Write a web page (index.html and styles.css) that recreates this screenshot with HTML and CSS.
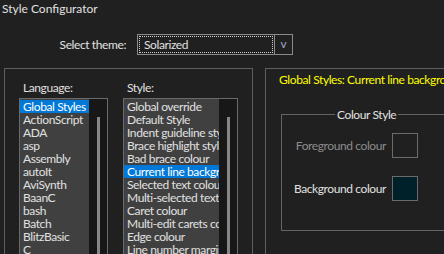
FILE: index.html
```html
<!DOCTYPE html>
<html lang="en">
<head>
    <meta charset="UTF-8">
    <meta name="viewport" content="width=device-width, initial-scale=1.0">
    <title>Style Configurator</title>
    <link rel="stylesheet" href="styles.css">
</head>
<body>
    <div class="title">Style Configurator</div>

    <div class="theme-row">
        <span class="theme-label">Select theme:</span>
        <div class="combo">
            <span class="combo-value">Solarized</span>
            <span class="combo-btn">v</span>
        </div>
    </div>

    <div class="main">
        <!-- language / style lists -->
        <div class="group left-group">
            <div class="col">
                <div class="col-label">Language:</div>
                <div class="listbox lang-list">
                    <ul class="items">
                        <li class="selected">Global Styles</li>
                        <li>ActionScript</li>
                        <li>ADA</li>
                        <li>asp</li>
                        <li>Assembly</li>
                        <li>autoIt</li>
                        <li>AviSynth</li>
                        <li>BaanC</li>
                        <li>bash</li>
                        <li>Batch</li>
                        <li>BlitzBasic</li>
                        <li>C</li>
                    </ul>
                    <div class="scroll"><div class="thumb"></div></div>
                </div>
            </div>
            <div class="col">
                <div class="col-label">Style:</div>
                <div class="listbox style-list">
                    <ul class="items">
                        <li>Global override</li>
                        <li>Default Style</li>
                        <li>Indent guideline style</li>
                        <li>Brace highlight style</li>
                        <li>Bad brace colour</li>
                        <li class="selected">Current line background colour</li>
                        <li>Selected text colour</li>
                        <li>Multi-selected text colour</li>
                        <li>Caret colour</li>
                        <li>Multi-edit carets colour</li>
                        <li>Edge colour</li>
                        <li>Line number margin</li>
                    </ul>
                    <div class="scroll"><div class="thumb"></div></div>
                </div>
            </div>
        </div>

        <!-- style details -->
        <div class="group right-group">
            <div class="heading">Global Styles: Current line background colour</div>
            <fieldset class="colour-style">
                <legend>Colour Style</legend>
                <div class="colour-rows">
                    <div class="colour-row disabled">
                        <span class="colour-label">Foreground colour</span>
                        <span class="swatch"></span>
                    </div>
                    <div class="colour-row">
                        <span class="colour-label">Background colour</span>
                        <span class="swatch bg-swatch"></span>
                    </div>
                </div>
            </fieldset>
        </div>
    </div>
</body>
</html>
```

FILE: styles.css
```css
body {
    margin: 0;
    width: 444px;
    height: 254px;
    overflow: hidden;
    background: #202020;
    color: #e0e0e0;
    font-family: Lato, "Noto Sans", sans-serif;
    font-size: 12px;
    line-height: 15px;
    letter-spacing: -0.4px;
}

.title {
    height: 18px;
    padding: 1px 2px 0;
    box-sizing: border-box;
    letter-spacing: 0;
}

/* theme picker */
.theme-row {
    display: flex;
    align-items: center;
    margin-top: 16px;
    padding-left: 40px;
}
.theme-label {
    width: 86px;
    text-align: right;
    margin-right: 11px;
}
.combo {
    display: flex;
    width: 156px;
    height: 21px;
    box-sizing: border-box;
    border: 1px solid #8a8a8a;
}
.combo-value {
    flex: 1;
    margin: 1px;
    padding-left: 4px;
    border: 1px dotted #cfcfcf;
    line-height: 15px;
}
.combo-btn {
    width: 17px;
    border-left: 1px solid #8a8a8a;
    text-align: center;
    color: #9ea6c8;
    line-height: 18px;
}

.main {
    display: flex;
    margin-top: 13px;
    padding-left: 4px;
}

.group {
    height: 200px;
    border: 1px solid #5e5e5e;
    border-bottom: none;
}

/* left box */
.left-group {
    display: flex;
    gap: 15px;
    width: 249px;
    box-sizing: border-box;
    padding: 11px 0 0 14px;
}
.col-label {
    padding-left: 4px;
    margin-bottom: 3px;
}
.listbox {
    display: flex;
    height: 170px;
    border: 1px solid #6a6a6a;
    overflow: hidden;
}
.lang-list {
    width: 87px;
}
.style-list {
    width: 113px;
}
.items {
    flex: 1;
    min-width: 0;
    margin: 0;
    padding: 1px 0 0;
    list-style: none;
    background: #404040;
}
.items li {
    height: 13px;
    line-height: 13px;
    padding-left: 3px;
    white-space: nowrap;
    overflow: hidden;
}
.items li.selected {
    background: #0078d7;
    color: #fff;
}
.scroll {
    width: 18px;
    background: #171717;
}
.thumb {
    width: 3px;
    height: 140px;
    margin: 18px 0 0 8px;
    background: #868686;
}

/* right box */
.right-group {
    flex: 1;
    margin-left: 12px;
    border-right: none;
    padding: 3px 0 0 13px;
    white-space: nowrap;
    overflow: hidden;
}
.heading {
    color: #ffff00;
}
.colour-style {
    width: 300px;
    margin: 20px 0 0 2px;
    padding: 0;
    border: 1px solid #646464;
}
.colour-style legend {
    margin-left: 53px;
    padding: 0 2px;
}
.colour-rows {
    display: flex;
    flex-direction: column;
    gap: 18px;
    padding: 11px 0 29px;
}
.colour-row {
    display: flex;
    align-items: center;
    gap: 6px;
}
.colour-label {
    width: 104px;
    text-align: right;
}
.colour-row.disabled .colour-label {
    color: #8c8c8c;
}
.swatch {
    width: 26px;
    height: 25px;
    box-sizing: border-box;
    border: 1px solid #6b6b6b;
    background: #202020;
}
.bg-swatch {
    background: #002129;
}
```
